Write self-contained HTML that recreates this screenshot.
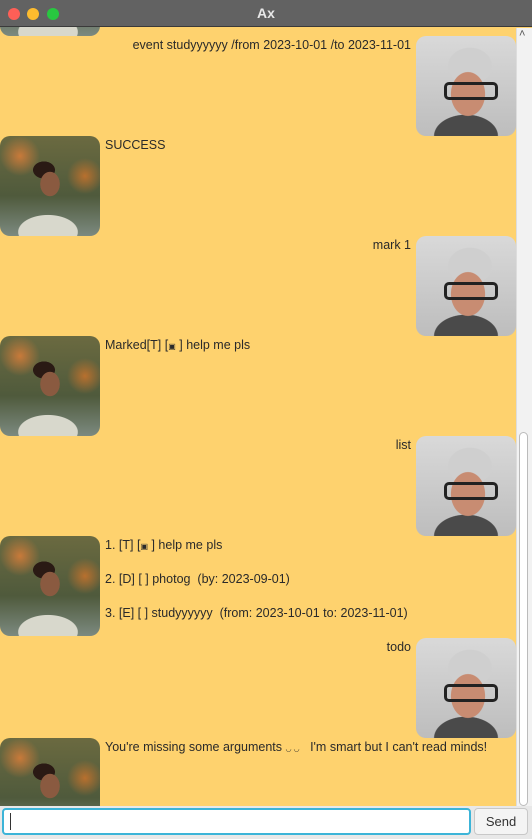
<!DOCTYPE html>
<html><head><style>
*{margin:0;padding:0;box-sizing:border-box}
body{width:532px;height:839px;overflow:hidden;background:#fed26e;font-family:"Liberation Sans",sans-serif;font-size:12.5px;color:#2a2a2a;position:relative}
.title{position:absolute;left:0;top:0;width:532px;height:27px;background:#626262;border-bottom:1px solid #3a3a3a;color:#e8e8e8;font-weight:bold;font-size:14px;text-align:center;line-height:27px;z-index:5}
.dot{position:absolute;top:8px;width:12px;height:12px;border-radius:50%}
.u{position:absolute;left:416px;width:100px;height:100px;border-radius:10px;overflow:hidden;background:radial-gradient(ellipse 28px 36px at 52px 58px,#c88c72 60%,transparent 62%),radial-gradient(ellipse 36px 30px at 54px 30px,#cfcfcf 60%,transparent 62%),radial-gradient(ellipse 45px 30px at 50px 100px,#4a4a4a 70%,transparent 72%),linear-gradient(#d9d9d9,#bdbdbd)}
.u:after{content:"";position:absolute;left:28px;top:46px;width:48px;height:12px;border:3px solid #222;border-radius:5px}
.b{position:absolute;left:0;width:100px;height:100px;border-radius:10px;overflow:hidden;background:radial-gradient(ellipse 16px 20px at 50px 48px,#8a5a40 60%,transparent 62%),radial-gradient(ellipse 18px 14px at 44px 34px,#2a1a14 60%,transparent 62%),radial-gradient(ellipse 42px 24px at 48px 96px,#d8d8cc 70%,transparent 72%),radial-gradient(circle at 20px 20px,#c87a3a 0,transparent 20px),radial-gradient(circle at 85px 40px,#b8702e 0,transparent 18px),linear-gradient(#6b6a40,#4f5a3c 60%,#7c8a80)}
.t{position:absolute;white-space:nowrap}
</style></head><body>
<div class="b" style="top:-64px"></div>
<div class="title">Ax
<div class="dot" style="left:8px;background:#fe5f57"></div>
<div class="dot" style="left:27px;background:#febc2e"></div>
<div class="dot" style="left:47px;background:#28c840"></div>
</div>
<div class="t" style="right:121px;top:38px">event studyyyyyy /from 2023-10-01 /to 2023-11-01</div>
<div class="u" style="top:36px"></div>
<div class="b" style="top:136px"></div>
<div class="t" style="left:105px;top:138px">SUCCESS</div>
<div class="t" style="right:121px;top:238px">mark 1</div>
<div class="u" style="top:236px"></div>
<div class="b" style="top:336px"></div>
<div class="t" style="left:105px;top:338px">Marked[T] [<span style="font-size:8px">▣</span> ] help me pls</div>
<div class="t" style="right:121px;top:438px">list</div>
<div class="u" style="top:436px"></div>
<div class="b" style="top:536px"></div>
<div class="t" style="left:105px;top:538px">1. [T] [<span style="font-size:8px">▣</span> ] help me pls</div>
<div class="t" style="left:105px;top:572px">2. [D] [ ] photog&nbsp; (by: 2023-09-01)</div>
<div class="t" style="left:105px;top:606px">3. [E] [ ] studyyyyyy&nbsp; (from: 2023-10-01 to: 2023-11-01)</div>
<div class="t" style="right:121px;top:640px">todo</div>
<div class="u" style="top:638px"></div>
<div class="b" style="top:738px"></div>
<div class="t" style="left:105px;top:740px">You're missing some arguments <span style="font-size:7px">◡ ◡</span>&nbsp;&nbsp; I'm smart but I can't read minds!</div>
<div style="position:absolute;left:516px;top:28px;width:16px;height:780px;background:#f2f2f2;border-left:1px solid #ddd"></div>
<div class="t" style="left:519px;top:28px;font-size:11px;color:#555">˄</div>
<div style="position:absolute;left:519px;top:432px;width:9px;height:374px;background:#fff;border:1px solid #bbb;border-radius:5px"></div>
<div style="position:absolute;left:0;top:806px;width:532px;height:33px;background:#e8e8e8"></div>
<div style="position:absolute;left:2px;top:808px;width:469px;height:27px;background:#fff;border:2px solid #3cb4d8;border-radius:4px"></div>
<div style="position:absolute;left:10px;top:813px;width:1px;height:17px;background:#333"></div>
<div style="position:absolute;left:474px;top:808px;width:54px;height:27px;background:#f4f4f4;border:1px solid #c8c8c8;border-radius:4px;text-align:center;line-height:25px;font-size:13px;color:#333">Send</div>
</body></html>
